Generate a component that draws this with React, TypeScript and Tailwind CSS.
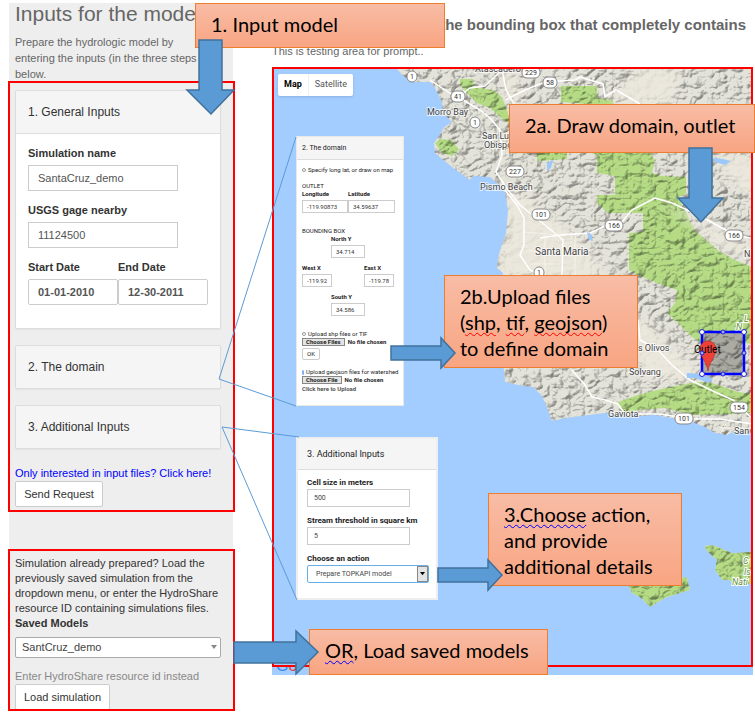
import React from "react";

const COAST =
  "M395 60 L397 69 L402 75 L408 79 L415 82 L430 82 L435 88 L442 102 L443 113 L452 122 L443 128 L441 133 L434 143 L435 153 L447 163 L460 173 L470 180 L473 176 L490 177 L500 186 L505 193 L508 210 L506 233 L498 257 L497 268 L503 273 L498 300 L492 330 L500 355 L504 370 L505 382 L523 386 L533 387 L542 396 L546 405 L552 421 L565 418 L605 413 L628 417 L655 415 L672 418 L692 422 L705 427 L715 433 L727 435 L735 431 L760 434 L760 60 Z";
const ISLAND_WEST = "M622 574 L632 593 L641 598 L650 607 L665 598 L690 590 L687 577 L680 578 L660 570 Z";
const ISLAND_EAST =
  "M704 546 L712 545 L718 547 L732 553 L760 551 L760 584 L735 584 L728 580 L722 580 L715 570 L717 560 L708 552 Z";

const FORESTS = [
  "M460 79 L473 79 L474 87 L493 90 L502 97 L508 113 L512 126 L500 117 L490 108 L477 103 L467 93 L460 85 Z",
  "M435 143 L440 139 L452 140 L459 150 L452 156 L442 153 Z",
  "M561 86 L597 86 L597 98 L613 100 L613 106 L561 102 Z",
  "M537 150 L567 150 L567 159 L537 161 Z",
  "M582 150 L648 150 L655 160 L652 173 L662 176 L686 177 L686 194 L678 197 L695 230 L718 250 L735 260 L760 270 L760 345 L745 343 L744 331 L702 331 L702 343 L692 337 L678 323 L667 313 L675 303 L677 290 L662 285 L638 275 L629 270 L629 233 L643 232 L643 213 L608 213 L597 203 L597 195 L615 195 L615 176 L597 173 L597 155 Z",
  "M618 402 L638 395 L665 388 L695 382 L712 383 L738 392 L760 395 L760 412 L732 414 L692 415 L665 408 L638 410 L622 414 Z",
  ISLAND_WEST,
  ISLAND_EAST,
];

const PLAINS = [
  "M506 195 L525 195 L548 215 L572 232 L590 250 L600 275 L560 278 L500 276 L500 258 L508 233 Z",
  "M595 320 L638 318 L670 345 L700 372 L690 380 L650 378 L632 350 Z",
  "M660 203 L700 222 L760 252 L760 262 L720 248 L690 222 Z",
  "M640 69 L680 69 L672 104 L610 100 L625 84 Z",
  "M713 155 L760 155 L760 205 L735 185 Z",
  "M500 69 L512 69 L518 90 L512 104 L505 95 Z",
];

const ROADS = [
  "M430 80 L448 92 L458 97 L480 110 L490 118 L500 130 L502 155 L496 172 L508 190 L520 205 L545 225 L563 240 L562 275",
  "M505 190 L517 205 L524 218 L524 245 L520 255 L530 270 L545 278",
  "M505 100 L525 90 L545 82 L575 80 L580 77 L603 84 L605 97 L616 90 L630 98 L640 104",
  "M502 69 L506 90 L514 104",
  "M540 238 L560 235 L590 233 L605 226 L620 224 L632 210 L655 198 L672 203 L700 216 L735 235 L760 240",
  "M638 320 L640 340 L658 350 L672 365 L690 380 L715 392 L733 400 L745 412 L752 418",
  "M572 370 L585 385 L592 397 L605 400 L618 404 L625 414 L660 414 L690 419 L720 419 L752 424",
  "M458 97 L470 88 L485 86 L500 72",
];

const SHIELDS: { x: number; y: number; label: string }[] = [
  { x: 412, y: 76, label: "1" },
  { x: 458, y: 96, label: "41" },
  { x: 475, y: 122, label: "1" },
  { x: 531, y: 72, label: "229" },
  { x: 550, y: 82, label: "58" },
  { x: 515, y: 171, label: "227" },
  { x: 541, y: 214, label: "101" },
  { x: 614, y: 225, label: "166" },
  { x: 734, y: 235, label: "166" },
  { x: 539, y: 272, label: "1" },
  { x: 739, y: 407, label: "154" },
  { x: 684, y: 418, label: "101" },
];

const PLACES: { x: number; y: number; label: string; size: number }[] = [
  { x: 475, y: 72, label: "Atascadero", size: 9 },
  { x: 427, y: 115, label: "Morro Bay", size: 9 },
  { x: 482, y: 139, label: "San Luis", size: 9 },
  { x: 484, y: 148, label: "Obispo", size: 9 },
  { x: 480, y: 190, label: "Pismo Beach", size: 9 },
  { x: 535, y: 255, label: "Santa Maria", size: 10 },
  { x: 628, y: 351, label: "Los Olivos", size: 9 },
  { x: 629, y: 375, label: "Solvang", size: 9 },
  { x: 608, y: 417, label: "Gaviota", size: 9 },
  { x: 734, y: 434, label: "San", size: 9 },
  { x: 744, y: 257, label: "N", size: 9 },
];

const HANDLES = [
  [702, 332], [744, 332], [702, 374], [744, 374],
  [723, 332], [702, 353], [744, 353], [723, 374],
];

function TerrainMap() {
  return (
    <svg
      className="block h-full w-full bg-[#a3ccff]"
      viewBox="274 69 477 596"
      preserveAspectRatio="xMinYMin slice"
      fontFamily="Roboto, sans-serif"
      role="img"
      aria-label="Terrain map"
    >
      <defs>
        <clipPath id="land">
          <path d={COAST} />
          <path d={ISLAND_WEST} />
          <path d={ISLAND_EAST} />
        </clipPath>
        <filter id="relief" x="0" y="0" width="100%" height="100%" colorInterpolationFilters="sRGB">
          <feTurbulence type="turbulence" baseFrequency="0.07 0.09" numOctaves="4" seed="8" result="n" />
          <feColorMatrix in="n" type="matrix" values="0 0 0 0 0  0 0 0 0 0  0 0 0 0 0  1 0 0 0 0" result="h" />
          <feDiffuseLighting in="h" surfaceScale="5" diffuseConstant="1.3" lightingColor="#ffffff">
            <feDistantLight azimuth="225" elevation="54" />
          </feDiffuseLighting>
        </filter>
        <filter id="soft">
          <feGaussianBlur stdDeviation="4" />
        </filter>
      </defs>
      <g clipPath="url(#land)">
        <path d="M380 60 H760 V620 H380 Z" fill="#e4e3da" />
        {FORESTS.map((d) => (
          <path key={d} d={d} fill="#b5dc85" />
        ))}
        <rect x="380" y="60" width="380" height="560" filter="url(#relief)" opacity="0.42" className="mix-blend-multiply" />
        {PLAINS.map((d) => (
          <path key={d} d={d} fill="#ece8dd" opacity="0.9" filter="url(#soft)" />
        ))}
        <g fill="none" stroke="#fff" strokeWidth="1.5" strokeLinejoin="round">
          {ROADS.map((d) => (
            <path key={d} d={d} />
          ))}
        </g>
        <g fill="none" stroke="#f8f6ee" strokeWidth="0.8">
          <path d="M526 251 H590 M545 235 V275 M575 236 V275 M524 232 L560 235 M530 264 H560 M720 428 H751 M726 424 L720 434 M740 424 V432" />
        </g>
        <path d="M587 232 l4 2 l2 7 l-4 -1 Z M547 163 l6 -3 l-2 8 l-4 3 Z M687 373 l14 1 l12 5 l-4 4 l-14 -5 l-8 0 Z M713 158 l10 1 l8 2 l-6 4 l-10 -3 Z" fill="#9cc8fb" />
      </g>

      {SHIELDS.map((s) => {
        const w = s.label.length * 4 + 6;
        return (
          <g key={`${s.x}-${s.y}`}>
            <rect x={s.x - w / 2} y={s.y - 5} width={w} height="11" rx="5" fill="#fff" stroke="#888" strokeWidth="1" />
            <text x={s.x} y={s.y + 3} textAnchor="middle" fontSize="7" fill="#333">
              {s.label}
            </text>
          </g>
        );
      })}
      <g fill="#444" stroke="#fff" strokeWidth="2" strokeOpacity="0.7" paintOrder="stroke">
        {PLACES.map((p) => (
          <text key={p.label} x={p.x} y={p.y} fontSize={p.size}>
            {p.label}
          </text>
        ))}
      </g>
      <g fill="#5f9440" stroke="#fff" strokeWidth="2" paintOrder="stroke" fontSize="9" fontStyle="italic">
        <text x="744" y="322">L</text>
        <text x="736" y="330">N</text>
        <text x="743" y="564">C</text>
        <text x="744" y="575">Is</text>
        <text x="732" y="585">Nati</text>
      </g>

      <rect x="702" y="332" width="42" height="42" fill="#000" fillOpacity="0.25" stroke="#0000ff" strokeWidth="2.5" />
      <path d="M708 371 C707 362 700 357 700 349 A8 8 0 0 1 716 349 C716 357 709 362 708 371 Z" fill="#ee4238" stroke="#b32b22" strokeWidth="0.6" />
      <text x="694" y="353" fontSize="10" fill="#000">Outlet</text>
      {HANDLES.map(([x, y], i) => (
        <circle key={i} cx={x} cy={y} r={i < 4 ? 2.5 : 2} fill={i < 4 ? "#fff" : "#a5a5e8"} stroke="#2020e0" strokeWidth="1" />
      ))}
    </svg>
  );
}

function Callout({ className, children }: { className: string; children: React.ReactNode }) {
  return (
    <div
      className={`absolute flex items-center border border-[#ed7d31] bg-linear-to-b from-[#f8bca5] to-[#f8a582] px-[15px] font-[Lato,sans-serif] text-[20px] leading-[26px] text-black ${className}`}
    >
      <p>{children}</p>
    </div>
  );
}

function Squiggle({ blue, children }: { blue?: boolean; children: React.ReactNode }) {
  return (
    <span
      className={`underline decoration-wavy decoration-1 underline-offset-2 [text-decoration-skip-ink:none] ${blue ? "decoration-[#0000ff]" : "decoration-[#ff0000]"}`}
    >
      {children}
    </span>
  );
}

function DomainInset() {
  const box = "mt-[2px] block h-[13px] w-full border border-[#ccc] bg-white px-1 text-[6px] font-normal text-[#333]";
  const radio = "size-1 appearance-none rounded-full border border-[#999]";
  const file =
    "block h-2 w-full text-[6px] leading-2 font-bold file:mr-[3px] file:h-2 file:border file:border-[#888] file:bg-[#e4e4e4] file:px-[3px] file:text-[6px] file:leading-[6px] file:font-bold";
  return (
    <form className="absolute top-[136px] left-[296px] h-[270px] w-[108px] border border-[#e8e8e8] bg-white font-[Roboto,sans-serif] text-[6px] leading-2 whitespace-nowrap text-[#222]">
      <h3 className="border-b border-[#ddd] bg-[#f5f5f5] px-[5px] py-[7px] text-[7px]">2. The domain</h3>
      <div className="px-[5px] pt-[6px]">
        <label className="flex items-center gap-[2px]">
          <input type="radio" name="source" className={radio} />
          Specify long lat, or draw on map
        </label>
        <p className="mt-2">OUTLET</p>
        <div className="flex">
          <label className="w-[46px] font-bold">
            Longitude
            <input className={box} defaultValue="-119.90873" />
          </label>
          <label className="w-[47px] font-bold">
            Latitude
            <input className={box} defaultValue="34.59637" />
          </label>
        </div>
        <p className="mt-[14px]">BOUNDING BOX</p>
        <label className="ml-[29px] block w-[34px] font-bold">
          North Y
          <input className={box} defaultValue="34.714" />
        </label>
        <div className="mt-[6px] flex justify-between pr-1">
          <label className="w-[30px] font-bold">
            West X
            <input className={box} defaultValue="-119.92" />
          </label>
          <label className="w-[30px] font-bold">
            East X
            <input className={box} defaultValue="-119.781" />
          </label>
        </div>
        <label className="mt-[6px] ml-[29px] block w-[34px] font-bold">
          South Y
          <input className={box} defaultValue="34.586" />
        </label>
        <label className="mt-[14px] flex items-center gap-[2px]">
          <input type="radio" name="source" className={radio} />
          Upload shp files or TIF
        </label>
        <input type="file" multiple aria-label="Shape files" className={file} />
        <button type="button" className="mt-[2px] block h-3 w-[18px] rounded-xs border border-[#ccc] bg-white text-[6px] leading-2">
          OK
        </button>
        <label className="mt-2 flex items-center gap-[2px]">
          <input type="radio" name="source" defaultChecked className="size-[5px] appearance-none rounded-full border border-[#8ab0f0] bg-[#3f6fc0]" />
          Upload geojson files for watershed
        </label>
        <input type="file" aria-label="Geojson file" className={file} />
        <p className="mt-px font-bold text-[#555]">Click here to Upload</p>
      </div>
    </form>
  );
}

function AdditionalInset() {
  const box = "mt-px block h-[18px] w-[103px] border border-[#ccc] bg-white px-[6px] text-[7px] font-normal text-[#444]";
  return (
    <form className="absolute top-[437px] left-[296px] h-[163px] w-[142px] border-2 border-[#eee] bg-white font-[Roboto,sans-serif] text-[8px] leading-[10px] text-[#222]">
      <h3 className="border-b border-[#ddd] bg-[#f5f5f5] px-[9px] py-[10px] text-[9px]">3. Additional Inputs</h3>
      <div className="flex flex-col gap-[9px] pt-2 pr-[7px] pl-[9px]">
        <label className="block font-bold">
          Cell size in meters
          <input className={box} defaultValue="500" />
        </label>
        <label className="block font-bold">
          Stream threshold in square km
          <input className={box} defaultValue="5" />
        </label>
        <label className="block font-bold">
          Choose an action
          <span className="relative mt-px block">
            <select className="block h-[18px] w-full appearance-none rounded-xs border border-[#66afe9] bg-white px-2 text-[7px] font-normal text-[#444]">
              <option>Prepare TOPKAPI model</option>
            </select>
            <span className="pointer-events-none absolute inset-y-px right-px flex w-[11px] items-center justify-center border border-[#888] bg-[#e4e4e4]">
              <svg viewBox="0 0 6 4" className="w-[5px]">
                <path d="M0 0 H6 L3 4 Z" fill="#000" />
              </svg>
            </span>
          </span>
        </label>
      </div>
    </form>
  );
}

function Annotations() {
  return (
    <svg className="pointer-events-none absolute top-0 left-0" width="755" height="713" viewBox="0 0 755 713" aria-hidden="true">
      <g fill="none" stroke="#5b9bd5" strokeWidth="1">
        <path d="M296 137 L219 379 L296 406" />
        <path d="M299 437 L222 427 L297 600" />
      </g>
      <g fill="#5b9bd5" stroke="#41719c" strokeWidth="1.5">
        <path d="M199 40 H222 V90 H234 L211 114 L187 90 H199 Z" />
        <path d="M689 148 H712 V198 H723 L701 222 L678 198 H689 Z" />
        <path d="M391 346 H441 V338 L455 353 L441 368 V360 H391 Z" />
        <path d="M438 568 H488 V560 L502 575 L488 590 V582 H438 Z" />
        <path d="M234 642 H296 V631 L318 652 L296 674 V663 H234 Z" />
      </g>
    </svg>
  );
}

function Sidebar() {
  const panel = "rounded-xs border border-[#ddd] bg-[#f5f5f5] shadow-xs";
  const field = "mt-[5px] block h-[26px] border border-[#ccc] bg-white px-[9px] text-[11px] text-[#555]";
  return (
    <aside className="w-[227px] shrink-0 text-[11px] text-[#333]">
      <header className="mr-[2px] ml-px h-[78px] overflow-hidden bg-[#eee] pl-[6px] text-[#666]">
        <h1 className="text-[21px] leading-[21px] whitespace-nowrap">Inputs for the model</h1>
        <p className="mt-[10px] leading-4">
          Prepare the hydrologic model by
          <br />
          entering the inputs (in the three steps
          <br />
          below.
        </p>
      </header>

      <section className="h-[431px] border-2 border-[#ff0000] bg-[#eee] pt-[7px] pr-3 pl-[5px]">
        <div className={panel}>
          <h2 className="border-b border-[#ddd] px-3 py-3 text-[12px] leading-[18px]">1. General Inputs</h2>
          <div className="bg-white px-3 pt-3 pb-[23px] leading-[14px] font-bold">
            <label className="block">
              Simulation name
              <input className={`w-[150px] font-normal ${field}`} defaultValue="SantaCruz_demo" />
            </label>
            <label className="mt-3 block">
              USGS gage nearby
              <input className={`w-[150px] font-normal ${field}`} defaultValue="11124500" />
            </label>
            <div className="mt-3 flex">
              <label className="w-[91px]">
                Start Date
                <input className={`w-full rounded-xs font-bold ${field}`} defaultValue="01-01-2010" />
              </label>
              <label className="w-[91px]">
                End Date
                <input className={`w-full rounded-xs font-bold ${field}`} defaultValue="12-30-2011" />
              </label>
            </div>
          </div>
        </div>
        <h2 className={`mt-4 px-3 py-3 text-[12px] leading-[18px] ${panel}`}>2. The domain</h2>
        <h2 className={`mt-4 px-3 py-3 text-[12px] leading-[18px] ${panel}`}>3. Additional Inputs</h2>
        <a href="#inputs" className="mt-4 block leading-4 whitespace-nowrap text-[#0000ff]">
          Only interested in input files? Click here!
        </a>
        <button type="button" className="block h-[26px] w-[88px] rounded-xs border border-[#ccc] bg-white">
          Send Request
        </button>
      </section>

      <div className="mr-[2px] ml-px h-[37px] bg-[#eee]" />

      <section className="h-[162px] overflow-hidden border-2 border-[#ff0000] bg-[#eee] pt-[5px] pr-3 pl-[5px]">
        <p className="leading-[15px] whitespace-nowrap">
          Simulation already prepared? Load the
          <br />
          previously saved simulation from the
          <br />
          dropdown menu, or enter the HydroShare
          <br />
          resource ID containing simulations files.
        </p>
        <label className="block leading-[15px] font-bold">
          Saved Models
          <span className="relative mt-[6px] block">
            <select className="block h-[21px] w-full appearance-none rounded-xs border border-[#aaa] bg-white px-[6px] text-[11px] font-normal text-[#444]">
              <option>SantCruz_demo</option>
            </select>
            <svg viewBox="0 0 6 4" className="pointer-events-none absolute top-2 right-1 w-[6px]">
              <path d="M0 0 H6 L3 4 Z" fill="#888" />
            </svg>
          </span>
        </label>
        <p className="mt-[11px] leading-[15px] text-[#888]">Enter HydroShare resource id instead</p>
        <button type="button" className="block h-[26px] w-[95px] rounded-xs border border-[#ccc] bg-white">
          Load simulation
        </button>
      </section>
    </aside>
  );
}

export default function App() {
  return (
    <div className="relative overflow-hidden bg-white font-['Liberation_Sans',Arial,sans-serif]">
      <div className="flex gap-[37px] pt-[3px] pr-[2px] pb-[2px] pl-2">
        <Sidebar />
        <main className="min-w-0 flex-1 text-[#666]">
          <h2 className="pt-3 pr-[7px] text-right text-[15px] leading-5 font-bold whitespace-nowrap">
            the bounding box that completely contains
          </h2>
          <p className="mt-[9px] mb-[9px] text-[11px] leading-[14px]">This is testing area for prompt..</p>
          <div className="relative h-[600px] border-2 border-[#ff0000]">
            <TerrainMap />
            <div className="absolute top-[5px] left-1 flex h-[22px] items-center rounded-xs bg-white font-[Roboto,sans-serif] text-[9px] text-[#555] shadow-sm">
              <button type="button" className="h-full border-r border-[#eee] px-[6px] font-bold text-black">
                Map
              </button>
              <button type="button" className="h-full px-[6px]">
                Satellite
              </button>
            </div>
          </div>
          <div className="h-2 overflow-hidden bg-[#a3ccff] pl-1">
            <p className="-mt-2 text-[16px] leading-[13px] text-[#4285f4]">
              G<span className="text-[#ea4335]">o</span>
            </p>
          </div>
        </main>
      </div>

      <DomainInset />
      <AdditionalInset />
      <Callout className="top-[3px] left-[195px] h-[45px] w-[250px] pb-1">1. Input model</Callout>
      <Callout className="top-[104px] left-[509px] h-[49px] w-[246px] pb-2">2a. Draw domain, outlet</Callout>
      <Callout className="top-[275px] left-[444px] h-[93px] w-[194px]">
        2b.Upload files
        <br />(<Squiggle>shp</Squiggle>, <Squiggle>tif</Squiggle>, <Squiggle>geojson</Squiggle>)
        <br />
        to define domain
      </Callout>
      <Callout className="top-[493px] left-[488px] h-[93px] w-[194px]">
        <Squiggle blue>3.Choose</Squiggle> action,
        <br />
        and provide
        <br />
        additional details
      </Callout>
      <Callout className="top-[629px] left-[309px] h-[46px] w-[239px] pb-1">
        <Squiggle blue>OR</Squiggle>, Load saved models
      </Callout>
      <Annotations />
    </div>
  );
}
